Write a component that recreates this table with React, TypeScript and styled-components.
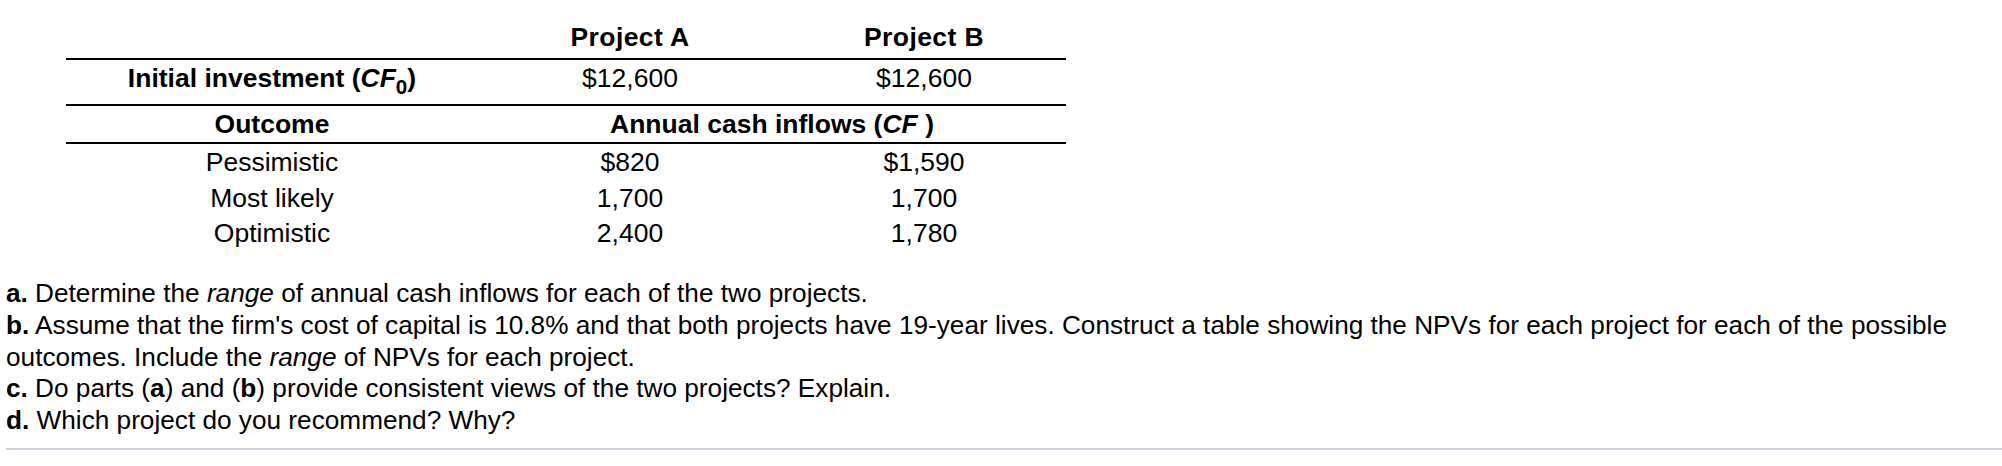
import * as React from 'react';
import styled, { createGlobalStyle } from 'styled-components';

const GlobalStyle = createGlobalStyle`
  html, body {
    margin: 0;
    padding: 0;
    background: #fff;
  }
  body {
    font-family: 'Liberation Sans', Arial, sans-serif;
    color: #000;
  }
`;

const Page = styled.div`
  width: 2002px;
  height: 466px;
  box-sizing: border-box;
  padding-top: 10px;
  overflow: hidden;
`;

const Table = styled.table`
  margin-left: 66px;
  width: 1000px;
  border-collapse: collapse;
  table-layout: fixed;
  font-size: 26.5px;
`;

const Col = styled.col<{ w: number }>`
  width: ${({ w }) => w}px;
`;

const Row = styled.tr<{ h: number; rule?: boolean }>`
  height: ${({ h }) => h}px;
  border-bottom: ${({ rule }) => (rule ? '2px solid #000' : 'none')};
`;

const Cell = styled.td<{ bold?: boolean; lift?: number }>`
  padding: 0 0 ${({ lift }) => lift || 0}px;
  text-align: center;
  vertical-align: middle;
  line-height: 30px;
  font-weight: ${({ bold }) => (bold ? 700 : 400)};
`;

const HeadCell = styled(Cell)`
  vertical-align: bottom;
  padding-bottom: 6px;
  letter-spacing: 0.4px;
`;

const Sub = styled.sub`
  font-size: 0.78em;
  font-style: normal;
  line-height: 0;
  vertical-align: -0.36em;
`;

const Questions = styled.div`
  margin-top: 28px;
  padding-left: 6px;
  font-size: 26.2px;
  line-height: 31.8px;
`;

const Line = styled.div``;

const Label = styled.b`
  font-weight: 700;
`;

const Rule = styled.hr`
  margin: 11px 0 0 6px;
  border: none;
  height: 2px;
  background: #cbcfd9;
`;

const outcomes = [
  { name: 'Pessimistic', a: '$820', b: '$1,590' },
  { name: 'Most likely', a: '1,700', b: '1,700' },
  { name: 'Optimistic', a: '2,400', b: '1,780' },
];

export default function App() {
  return (
    <Page>
      <GlobalStyle />
      <Table>
        <colgroup>
          <Col w={412} />
          <Col w={304} />
          <Col w={284} />
        </colgroup>
        <tbody>
          <Row h={49} rule>
            <HeadCell />
            <HeadCell bold>Project A</HeadCell>
            <HeadCell bold>Project B</HeadCell>
          </Row>
          <Row h={46} rule>
            <Cell bold lift={8}>
              Initial investment (<i>CF</i>
              <Sub>0</Sub>)
            </Cell>
            <Cell lift={8}>$12,600</Cell>
            <Cell lift={8}>$12,600</Cell>
          </Row>
          <Row h={38} rule>
            <Cell bold>Outcome</Cell>
            <Cell bold colSpan={2}>
              Annual cash inflows (<i>CF</i> )
            </Cell>
          </Row>
          {outcomes.map((o, i) => (
            <Row h={i === 0 ? 37 : 35} key={o.name}>
              <Cell>{o.name}</Cell>
              <Cell>{o.a}</Cell>
              <Cell>{o.b}</Cell>
            </Row>
          ))}
        </tbody>
      </Table>
      <Questions>
        <Line>
          <Label>a.</Label> Determine the <i>range</i> of annual cash inflows for each of the two
          projects.
        </Line>
        <Line>
          <Label>b.</Label> Assume that the firm's cost of capital is 10.8% and that both projects
          have 19-year lives. Construct a table showing the NPVs for each project for each of the
          possible
        </Line>
        <Line>
          outcomes. Include the <i>range</i> of NPVs for each project.
        </Line>
        <Line>
          <Label>c.</Label> Do parts (<Label>a</Label>) and (<Label>b</Label>) provide consistent
          views of the two projects? Explain.
        </Line>
        <Line>
          <Label>d.</Label> Which project do you recommend? Why?
        </Line>
      </Questions>
      <Rule />
    </Page>
  );
}
